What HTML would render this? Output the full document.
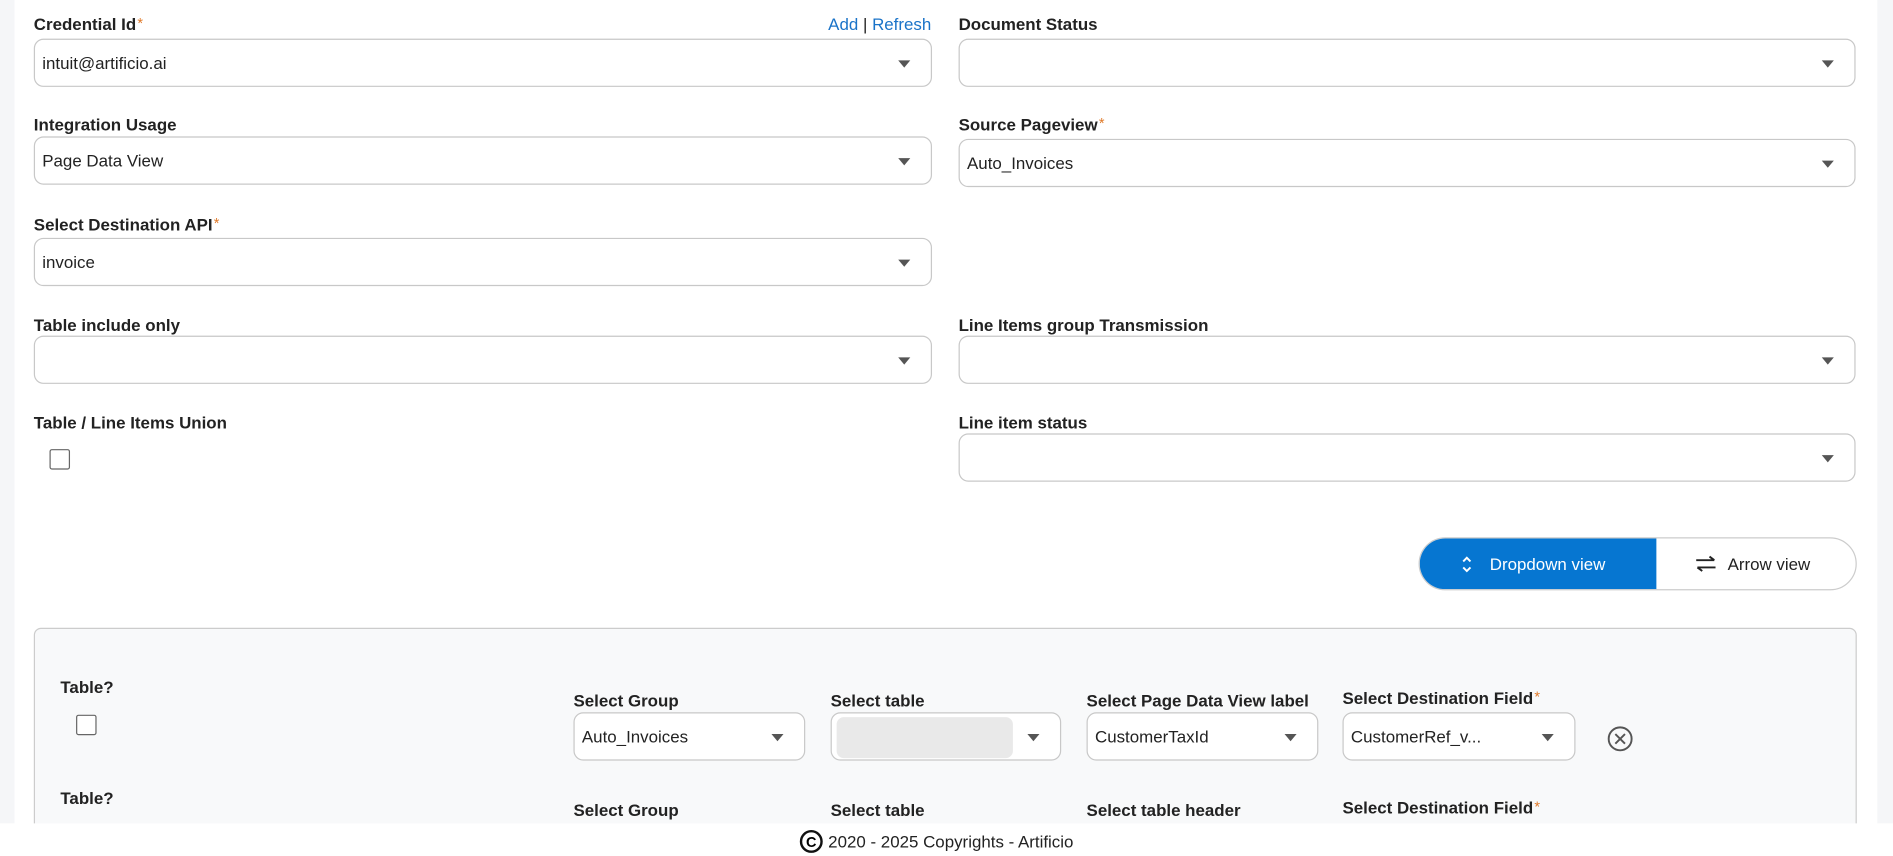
<!DOCTYPE html>
<html><head><meta charset="utf-8"><style>
html,body{margin:0;padding:0;width:1893px;height:856px;overflow:hidden;background:#f5f6f8;}
#w{position:absolute;left:0;top:0;width:1568px;height:709px;overflow:hidden;transform:scale(1.20727);transform-origin:0 0;font-family:"Liberation Sans",sans-serif;color:#222;}
.page{position:absolute;left:12px;top:0;width:1543px;height:709px;background:#fff;}
.lbl{position:absolute;font-size:14px;font-weight:bold;color:#222;white-space:nowrap;}
.lbl i{color:#e07a2a;font-style:normal;font-weight:normal;font-size:12px;vertical-align:2px;margin-left:1px}
.sel{position:absolute;height:38px;border:1px solid #c8c8c8;border-radius:8px;background:#fff;font-size:14px;line-height:38px;padding-left:6px;box-sizing:content-box;}
.sel:after{content:"";position:absolute;right:17px;top:17px;border-left:5px solid transparent;border-right:5px solid transparent;border-top:6px solid #555;}
.cb{position:absolute;width:15px;height:15px;border:1.5px solid #666;border-radius:2px;background:#fff}
.panel{position:absolute;left:28px;top:520px;width:1508px;height:200px;border:1px solid #ccc;border-radius:6px;background:#f8f9fa;}
</style></head><body><div id="w">
<div class="page"></div>
<div class="lbl" style="left:28px;top:12px">Credential Id<i>*</i></div>
<div style="position:absolute;left:686px;top:12px;font-size:14px;color:#1a73c8">Add <span style="color:#222">|</span> Refresh</div>
<div class="sel" style="left:28px;top:32px;width:736px">intuit@artificio.ai</div>
<div class="lbl" style="left:794px;top:12px">Document Status</div>
<div class="sel" style="left:794px;top:32px;width:735px"></div>

<div class="lbl" style="left:28px;top:95px">Integration Usage</div>
<div class="sel" style="left:28px;top:113px;width:736px">Page Data View</div>
<div class="lbl" style="left:794px;top:95px">Source Pageview<i>*</i></div>
<div class="sel" style="left:794px;top:115px;width:735px">Auto_Invoices</div>

<div class="lbl" style="left:28px;top:178px">Select Destination API<i>*</i></div>
<div class="sel" style="left:28px;top:197px;width:736px">invoice</div>

<div class="lbl" style="left:28px;top:261px">Table include only</div>
<div class="sel" style="left:28px;top:278px;width:736px"></div>
<div class="lbl" style="left:794px;top:261px">Line Items group Transmission</div>
<div class="sel" style="left:794px;top:278px;width:735px"></div>

<div class="lbl" style="left:28px;top:342px">Table / Line Items Union</div>
<div class="cb" style="left:41px;top:372px"></div>
<div class="lbl" style="left:794px;top:342px">Line item status</div>
<div class="sel" style="left:794px;top:359px;width:735px"></div>

<div style="position:absolute;left:1175px;top:445px;width:361px;height:42px;border:1px solid #ccc;border-radius:22px;overflow:hidden;background:#fff;font-size:14px;">
 <div style="position:absolute;left:0;top:0;width:196px;height:42px;background:#0676d1;color:#fff;line-height:42px;">
  <svg style="position:absolute;left:34px;top:14px" width="10" height="15" viewBox="0 0 10 15"><path d="M2 5 L5 2 L8 5 M2 10 L5 13 L8 10" stroke="#fff" stroke-width="1.6" fill="none"/></svg>
  <span style="position:absolute;left:58px">Dropdown view</span></div>
 <svg style="position:absolute;left:228px;top:14px" width="18" height="14" viewBox="0 0 18 14"><path d="M1 4 H16 M12 1 L16 4 M17 10 H2 M6 13 L2 10" stroke="#222" stroke-width="1.6" fill="none"/></svg>
 <span style="position:absolute;left:255px;line-height:42px;color:#222">Arrow view</span>
</div>

<div class="panel"></div>
<div class="lbl" style="left:50px;top:561px">Table?</div>
<div class="cb" style="left:63px;top:592px"></div>
<div class="lbl" style="left:475px;top:572px">Select Group</div>
<div class="lbl" style="left:688px;top:572px">Select table</div>
<div class="lbl" style="left:900px;top:572px">Select Page Data View label</div>
<div class="lbl" style="left:1112px;top:570px">Select Destination Field<i>*</i></div>
<div class="sel" style="left:475px;top:590px;width:184px">Auto_Invoices</div>
<div class="sel" style="left:688px;top:590px;width:183px;padding-left:6px"><div style="position:absolute;left:4px;top:3px;width:146px;height:34px;background:#e9e9e9;border-radius:6px"></div></div>
<div class="sel" style="left:900px;top:590px;width:184px">CustomerTaxId</div>
<div class="sel" style="left:1112px;top:590px;width:185px">CustomerRef_v...</div>
<svg style="position:absolute;left:1331px;top:601px" width="22" height="22" viewBox="0 0 22 22"><circle cx="11" cy="11" r="9.5" stroke="#555" stroke-width="1.6" fill="none"/><path d="M7 7 L15 15 M15 7 L7 15" stroke="#555" stroke-width="1.6"/></svg>
<div class="lbl" style="left:50px;top:653px">Table?</div>
<div class="lbl" style="left:475px;top:663px">Select Group</div>
<div class="lbl" style="left:688px;top:663px">Select table</div>
<div class="lbl" style="left:900px;top:663px">Select table header</div>
<div class="lbl" style="left:1112px;top:661px">Select Destination Field<i>*</i></div>

<div style="position:absolute;left:0;top:682px;width:1568px;height:40px;background:#fff"></div>
<div style="position:absolute;left:662px;top:686px;font-size:14px;color:#222;white-space:nowrap;line-height:22px">
<svg style="vertical-align:-5px;margin-right:4px" width="20" height="20" viewBox="0 0 20 20"><circle cx="10" cy="10" r="8.5" stroke="#111" stroke-width="2" fill="none"/><text x="10" y="14.5" font-size="12" font-weight="bold" text-anchor="middle" font-family="Liberation Sans">C</text></svg>2020 - 2025 Copyrights - Artificio</div>
</div></body></html>
